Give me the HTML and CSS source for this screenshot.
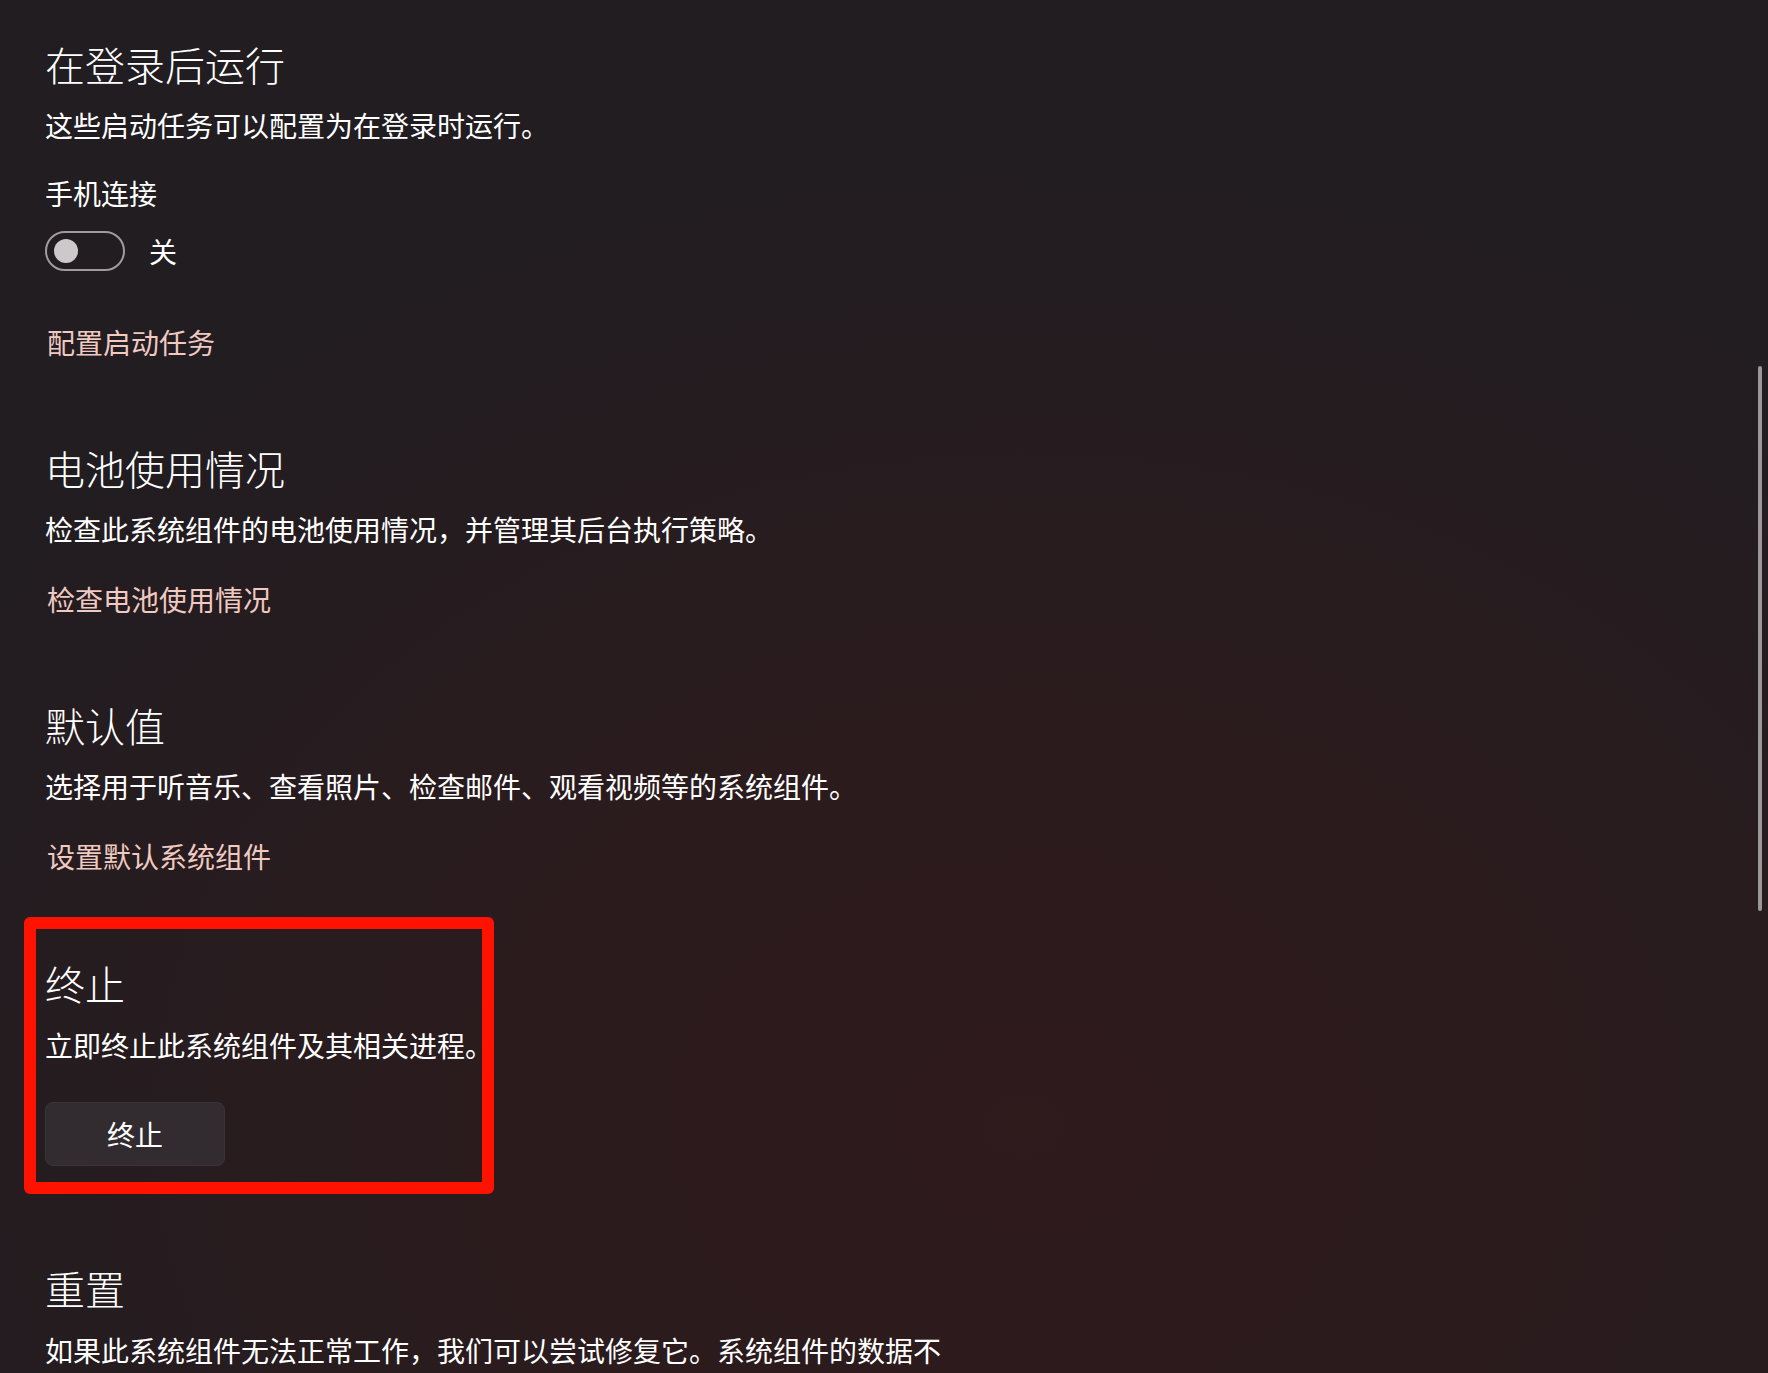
FILE: index.html
```html
<!DOCTYPE html>
<html lang="zh-CN">
<head>
<meta charset="utf-8">
<title>系统组件设置</title>
<link rel="stylesheet" href="styles.css">
</head>
<body>
<div class="page">
  <section class="section">
    <h2 class="title">在登录后运行</h2>
    <p class="desc">这些启动任务可以配置为在登录时运行。</p>
    <div class="label">手机连接</div>
    <div class="toggle-row">
      <span class="toggle"><span class="knob"></span></span>
      <span class="toggle-text">关</span>
    </div>
    <a class="link link-first">配置启动任务</a>
  </section>

  <section class="section gap-lg">
    <h2 class="title">电池使用情况</h2>
    <p class="desc">检查此系统组件的电池使用情况，并管理其后台执行策略。</p>
    <a class="link">检查电池使用情况</a>
  </section>

  <section class="section gap-lg">
    <h2 class="title">默认值</h2>
    <p class="desc">选择用于听音乐、查看照片、检查邮件、观看视频等的系统组件。</p>
    <a class="link">设置默认系统组件</a>
  </section>

  <section class="section highlight">
    <h2 class="title">终止</h2>
    <p class="desc desc-tight">立即终止此系统组件及其相关进程。</p>
    <button class="button">终止</button>
  </section>

  <section class="section gap-reset">
    <h2 class="title">重置</h2>
    <p class="desc desc-tight">如果此系统组件无法正常工作，我们可以尝试修复它。系统组件的数据不</p>
  </section>
</div>
<div class="scrollbar"></div>
</body>
</html>
```
FILE: styles.css
```css
html, body {
  margin: 0;
  padding: 0;
  width: 1768px;
  height: 1373px;
  overflow: hidden;
}
body {
  background-color: #211d21;
  background-image:
    radial-gradient(ellipse 1300px 1000px at 58% 82%, rgba(47, 26, 28, 1) 0%, rgba(44, 27, 29, 0.9) 40%, rgba(33, 29, 33, 0) 100%);
  color: #ffffff;
  font-family: "Noto Sans CJK SC", "Microsoft YaHei", "Noto Sans", sans-serif;
  position: relative;
}
.page {
  padding: 36px 0 0 45px;
}
.section {
  display: flex;
  flex-direction: column;
  align-items: flex-start;
}
.title {
  margin: 0;
  font-size: 40px;
  line-height: 56px;
  font-weight: 300;
  letter-spacing: 0;
}
.desc {
  margin: 14px 0 0;
  font-size: 28px;
  line-height: 38px;
  white-space: nowrap;
}
.desc-tight {
  margin-top: 15px;
}
.label {
  margin-top: 30px;
  font-size: 28px;
  line-height: 38px;
}
.toggle-row {
  margin-top: 19px;
  display: flex;
  align-items: center;
  gap: 24px;
  height: 40px;
}
.toggle {
  box-sizing: border-box;
  width: 80px;
  height: 40px;
  border: 2px solid #a19b9e;
  border-radius: 20px;
  display: flex;
  align-items: center;
  padding-left: 7px;
}
.knob {
  width: 24px;
  height: 24px;
  border-radius: 50%;
  background: #cdc9cb;
}
.toggle-text {
  font-size: 28px;
  line-height: 38px;
}
.link {
  margin-top: 32px;
  font-size: 28px;
  line-height: 38px;
  color: #f0c9c1;
  cursor: pointer;
  padding-left: 2px;
}
.link-first {
  margin-top: 52px;
}
.gap-lg {
  margin-top: 79px;
}
.highlight {
  box-sizing: border-box;
  width: 470px;
  margin-top: 42px;
  margin-left: -21px;
  border: 12px solid #ff1200;
  border-radius: 6px;
  padding: 26px 0 16px 9px;
}
.button {
  margin-top: 38px;
  width: 180px;
  height: 64px;
  border: 1px solid #3a3438;
  border-radius: 8px;
  background: #322c30;
  color: #ffffff;
  font-family: inherit;
  font-size: 28px;
  line-height: 38px;
  padding: 0;
}
.gap-reset {
  margin-top: 66px;
}
.scrollbar {
  position: absolute;
  left: 1758px;
  top: 366px;
  width: 4px;
  height: 545px;
  border-radius: 2px;
  background: #9b9799;
}
```
